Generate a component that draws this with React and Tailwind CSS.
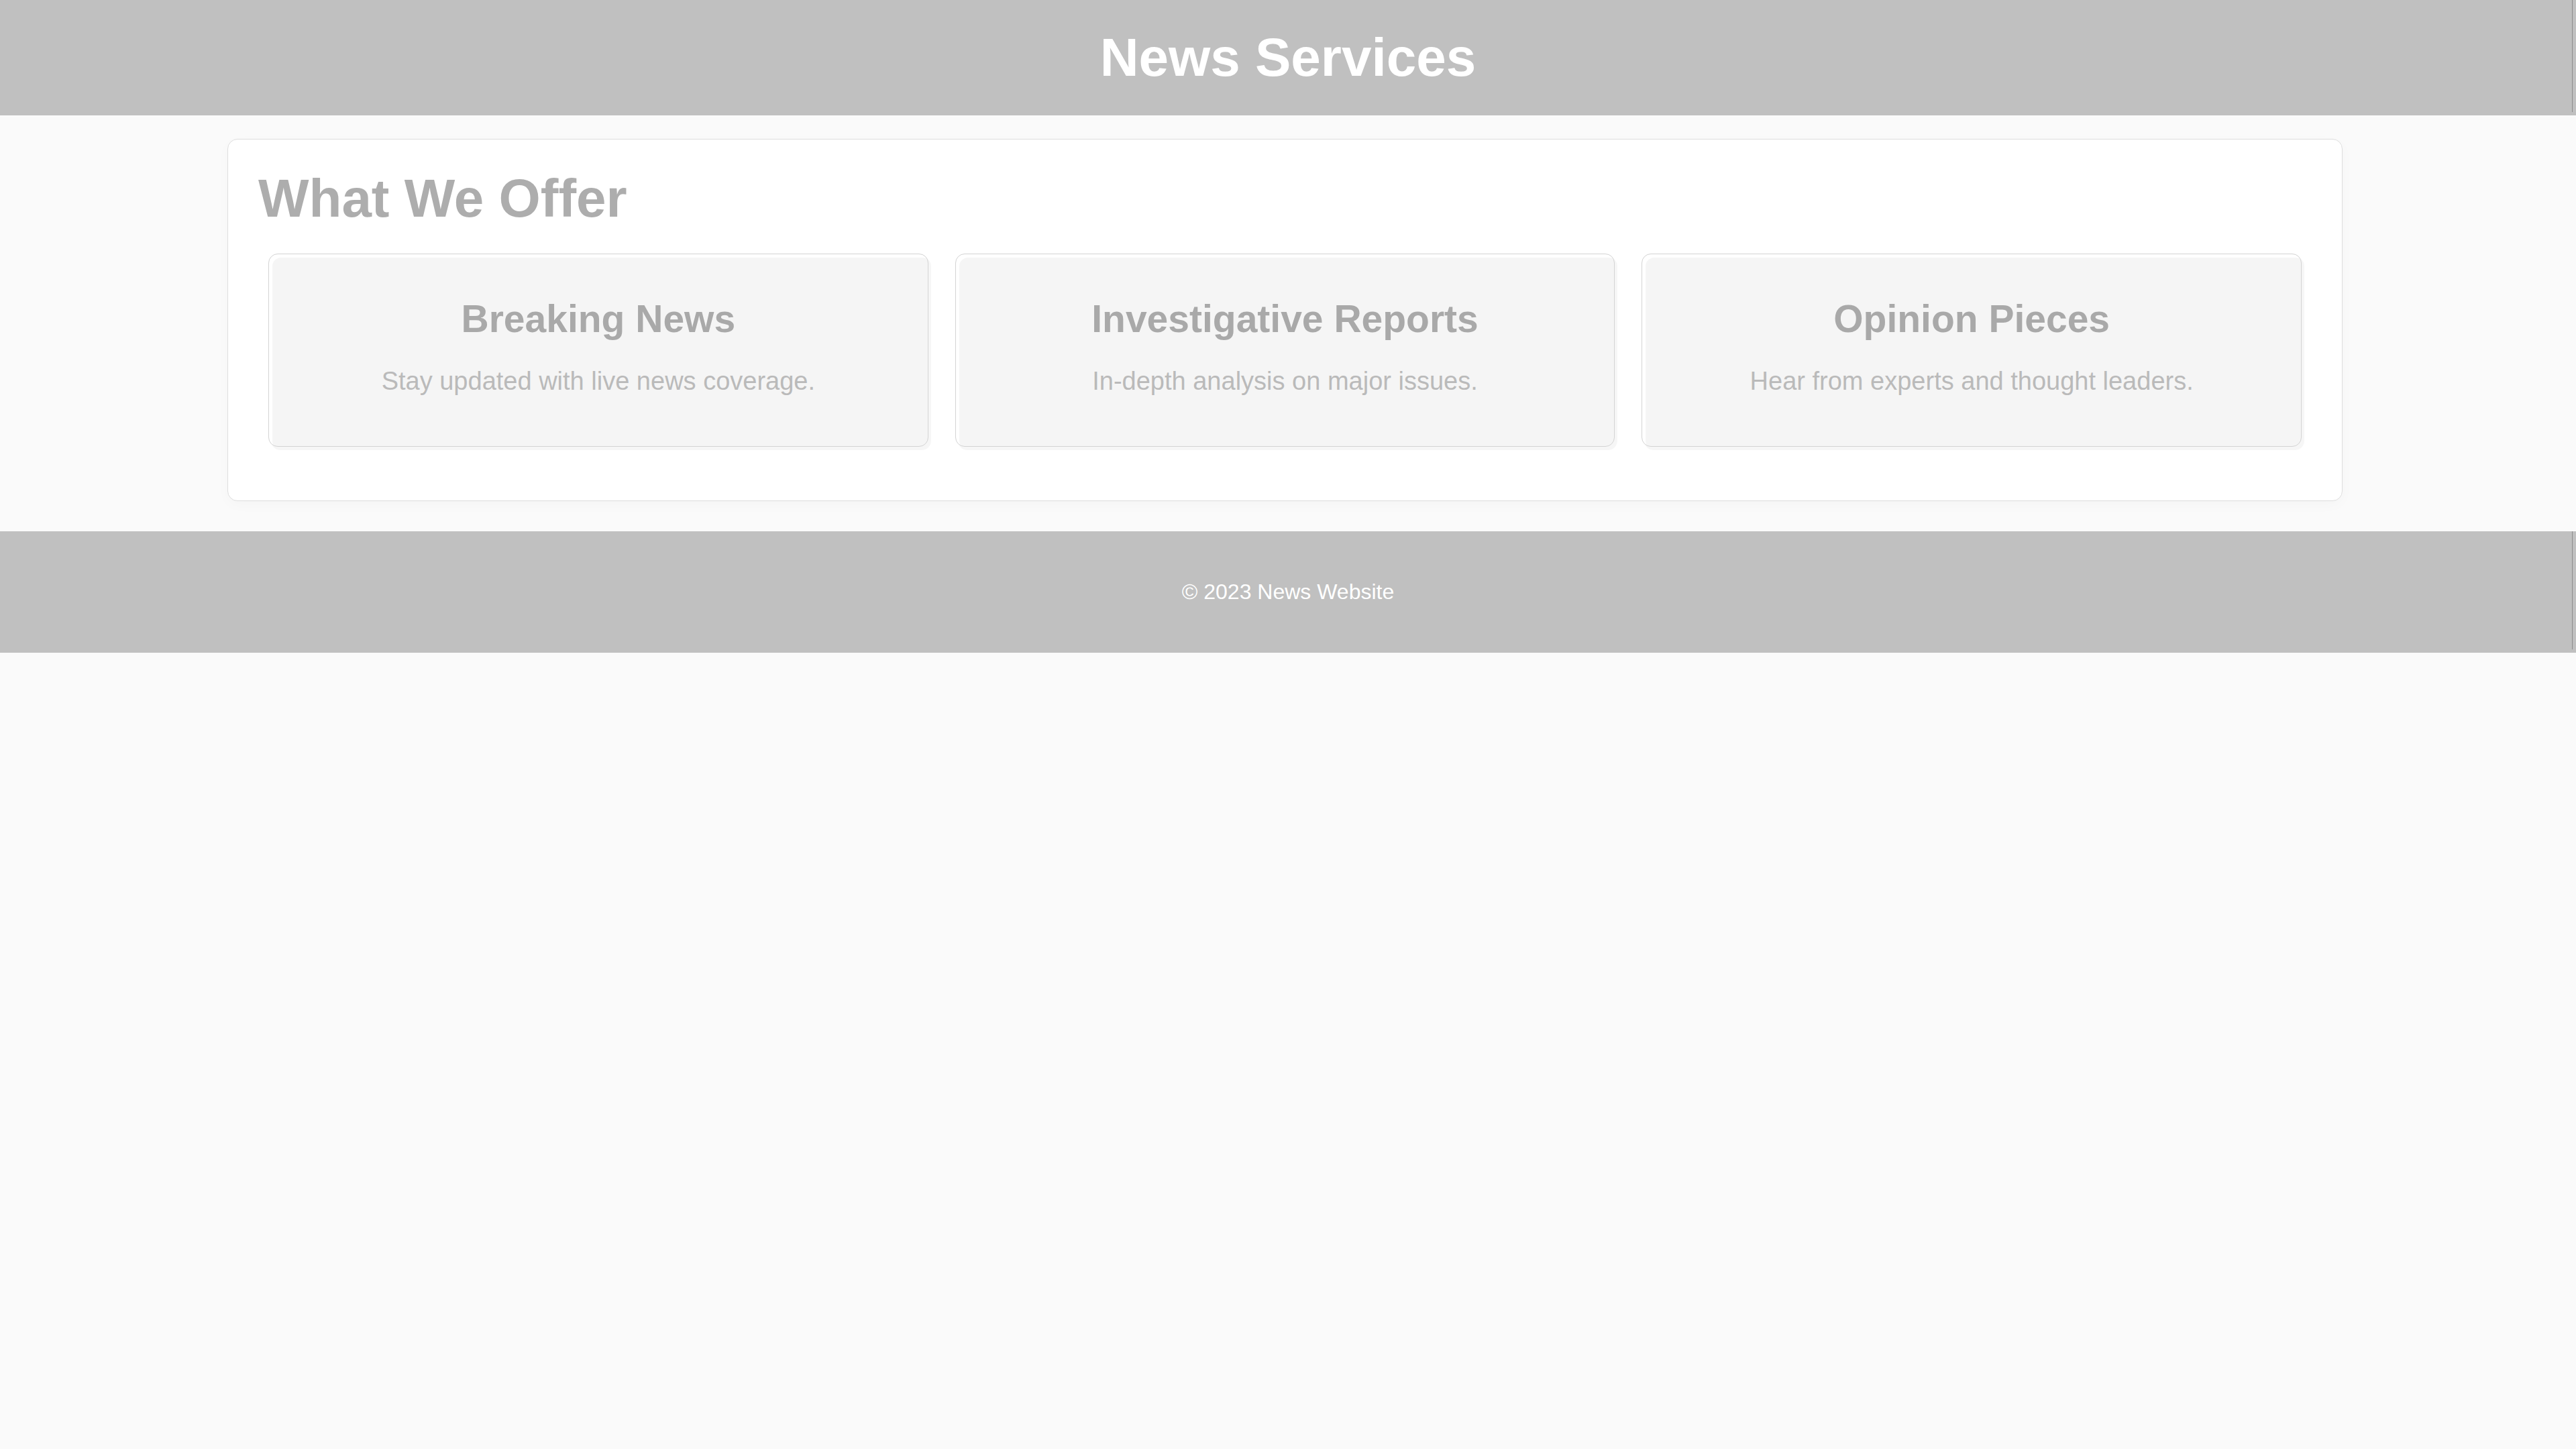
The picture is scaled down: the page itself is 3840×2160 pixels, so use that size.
export default function App() {
  const cards = [
    { t: "Breaking News", d: "Stay updated with live news coverage." },
    { t: "Investigative Reports", d: "In-depth analysis on major issues." },
    { t: "Opinion Pieces", d: "Hear from experts and thought leaders." },
  ];
  return (
    <div className="min-h-[2160px] w-full bg-[#fafafa] font-['Liberation_Sans',Arial,sans-serif]">
      <header className="relative flex h-[172px] items-center justify-center bg-[#c0c0c0]">
        <h1 className="text-[80px] leading-[92px] font-bold text-white">News Services</h1>
        <span className="absolute right-[5px] top-0 bottom-[5px] w-px bg-[#8c8c8c]" />
      </header>
      <main className="ml-[339px] mt-[35px] mb-[45px] w-[3153px] rounded-[15px] border border-[#dedede] bg-white pt-[42px] pb-[80px] pl-[45px] pr-[45px] shadow-[0_6px_20px_rgba(0,0,0,0.025)]">
        <h2 className="text-[80px] leading-[92px] font-bold text-[#adadad]">What We Offer</h2>
        <div className="mt-[36px] grid grid-cols-3 gap-[40px] px-[15px]">
          {cards.map((c) => (
            <div
              key={c.t}
              className="flex h-[288px] flex-col items-center rounded-[14px] border border-[#d4d4d4] bg-[#f5f5f5] pt-[64px] text-center shadow-[inset_5px_5px_0_#ffffff,4px_5px_0_rgba(0,0,0,0.035)]"
            >
              <h3 className="text-[57px] leading-[65px] font-bold text-[#a9a9a9]">{c.t}</h3>
              <p className="mt-[38px] text-[38px] leading-[44px] text-[#bababa]">{c.d}</p>
            </div>
          ))}
        </div>
      </main>
      <footer className="relative flex h-[181px] items-center justify-center bg-[#c0c0c0]">
        <p className="text-[32px] leading-[37px] text-white">© 2023 News Website</p>
        <span className="absolute right-[5px] top-0 bottom-[5px] w-px bg-[#8c8c8c]" />
      </footer>
    </div>
  );
}
